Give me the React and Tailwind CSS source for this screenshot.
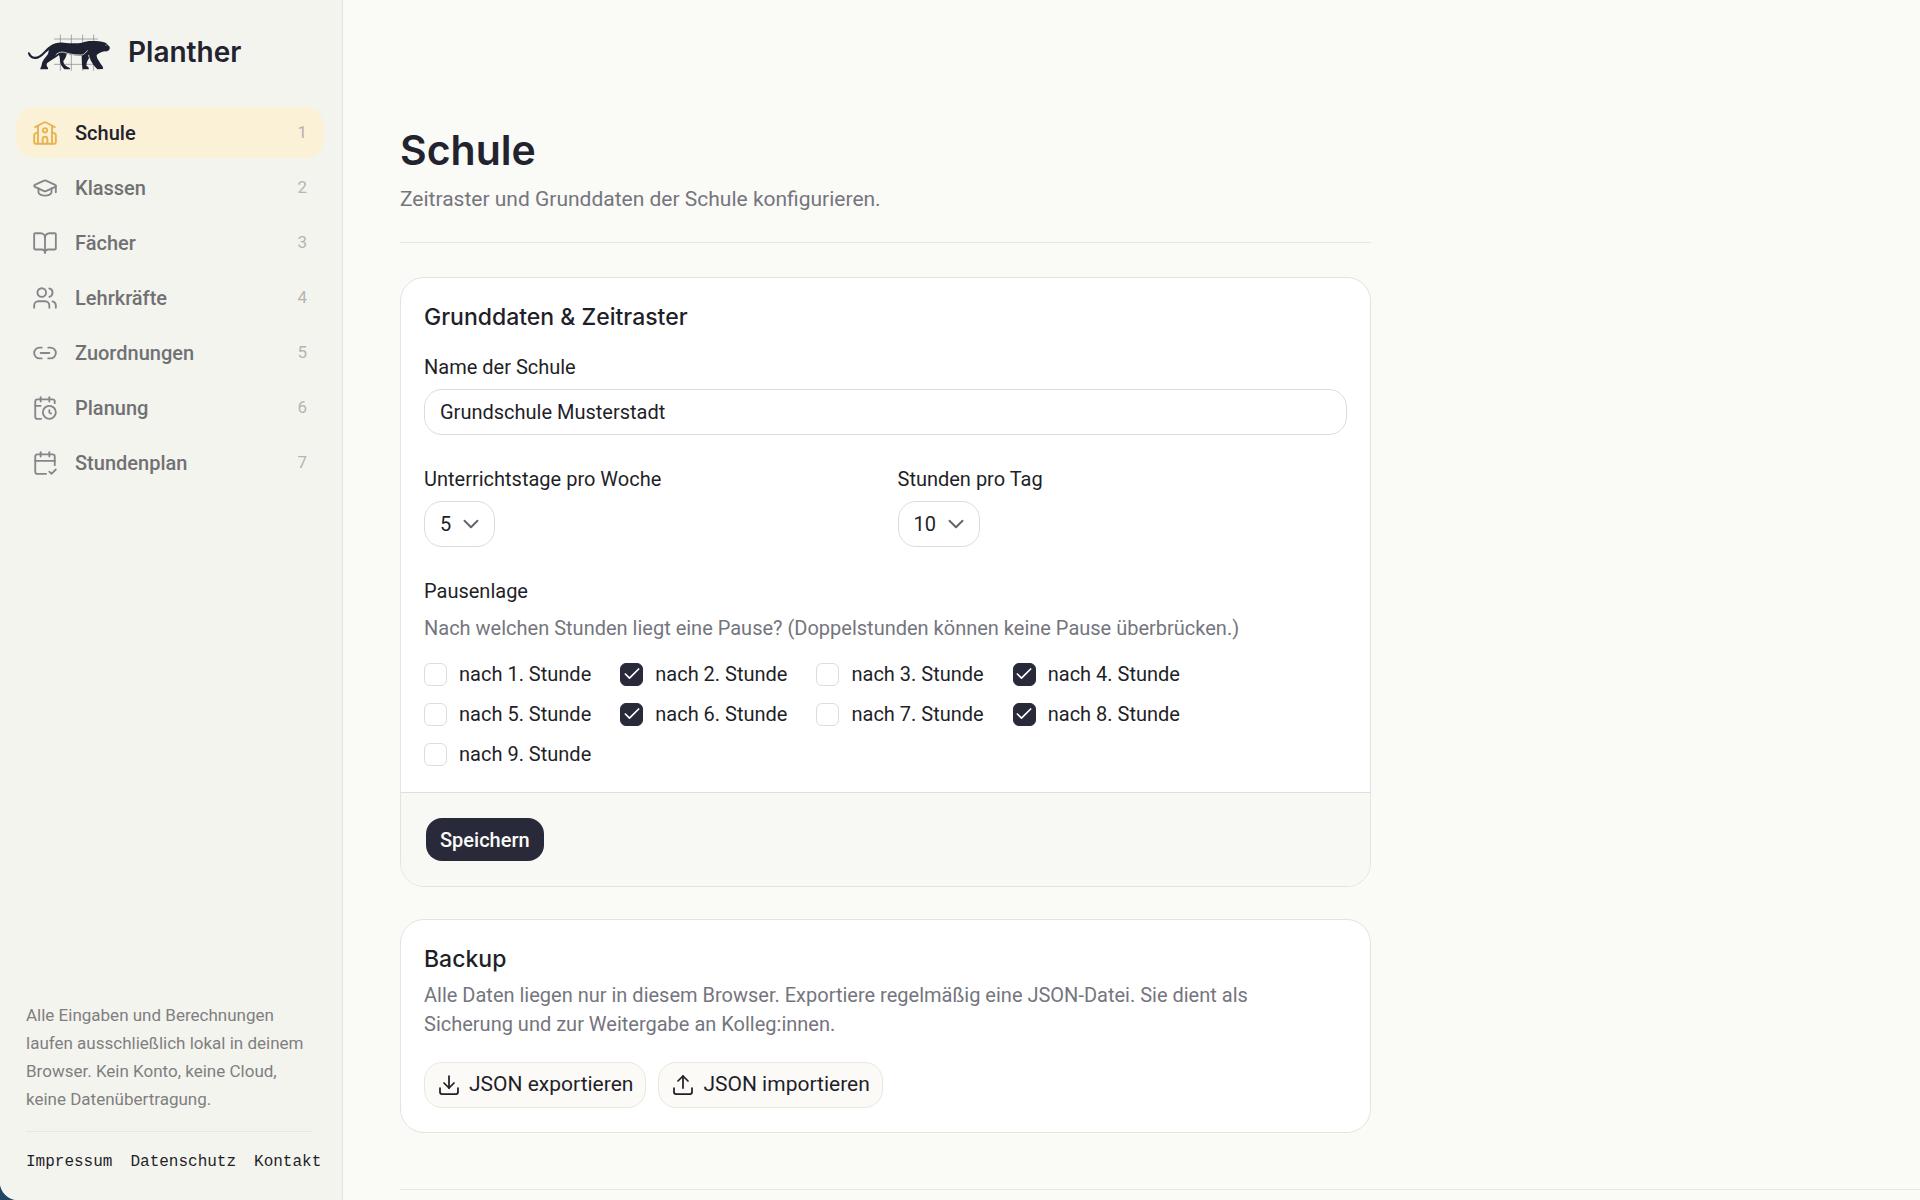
import { useState } from "react";
import {
  BookOpen,
  CalendarCheck2,
  CalendarClock,
  Check,
  ChevronDown,
  Download,
  GraduationCap,
  Link2,
  Upload,
  Users,
} from "lucide-react";

function SchoolIcon(props) {
  return (
    <svg
      viewBox="0 0 24 24"
      fill="none"
      stroke="currentColor"
      strokeWidth="1.8"
      strokeLinecap="round"
      strokeLinejoin="round"
      aria-hidden="true"
      className={props.className}
    >
      <path d="M3 6.6 11 2.3a2 2 0 0 1 2 0l8 4.3" />
      <path d="M5.5 5.4V22M18.5 5.4V22" />
      <path d="M5.5 11.5 3.2 12.4A2 2 0 0 0 2 14.2V20a2 2 0 0 0 2 2h16a2 2 0 0 0 2-2v-5.8a2 2 0 0 0-1.2-1.8l-2.3-.9" />
      <circle cx="12" cy="9.5" r="2" />
      <path d="M9.8 22v-4.3a2.2 2.2 0 0 1 4.4 0V22" />
    </svg>
  );
}

function PantherLogo() {
  return (
    <svg viewBox="0 0 270 132" className="h-11 w-[90px] shrink-0" aria-hidden="true">
      <g stroke="#85868c" strokeWidth="2.2" fill="none">
        <path d="M103 14V122M136 14V122M170 14V122M203 14V122" />
        <path d="M84 27H216M84 103H216" />
      </g>
      <path
        fill="#1e2131"
        d="M6 70C5 66 10 65 12 69C15 77 21 81 29 80C47 78 55 58 73 47C84 40 97 37 112 38C132 40 152 41 168 38C178 34 190 32 203 33C214 33 223 34 231 36C240 38 243 41 245 45C250 48 253 52 251 56C249 62 243 65 236 64C227 66 220 69 212 75C211 83 218 92 226 104C229 108 233 112 231 117L214 118C206 110 197 98 190 84C185 90 182 97 181 107C186 110 190 113 188 118L170 118C168 108 167 92 167 77C151 77 137 74 122 71C121 80 117 87 112 93C112 101 117 107 125 111C130 113 134 115 132 118L115 118C108 110 102 101 102 92C102 85 101 80 99 75C88 84 73 91 63 100C61 105 62 110 66 113C67 116 66 118 63 118L43 118C42 113 47 110 47 104C48 93 58 83 66 72C67 67 68 63 69 60C56 69 46 86 29 87C17 88 8 80 6 70Z"
      />
      <path
        fill="none"
        stroke="#f4f4ef"
        strokeWidth="2.4"
        strokeLinecap="round"
        d="M90 74C98 66 108 64 121 69C138 74 152 75 168 75C174 74 179 68 184 62M188 76C188 80 190 84 192 87"
      />
      <circle cx="240" cy="45" r="1.6" fill="#f4f4ef" />
    </svg>
  );
}

const navItems = [
  { label: "Schule", icon: SchoolIcon },
  { label: "Klassen", icon: GraduationCap },
  { label: "Fächer", icon: BookOpen },
  { label: "Lehrkräfte", icon: Users },
  { label: "Zuordnungen", icon: Link2 },
  { label: "Planung", icon: CalendarClock },
  { label: "Stundenplan", icon: CalendarCheck2 },
];

function Sidebar() {
  return (
    <aside className="flex w-[343px] shrink-0 flex-col border-r border-[#e6e2d9] bg-[#f4f4ef]">
      <div className="flex items-center gap-3 pt-[30px] pl-[26px]">
        <PantherLogo />
        <span className="font-[Inter,sans-serif] text-[28px] leading-9 font-semibold text-[#23232f]">
          Planther
        </span>
      </div>
      <nav className="mt-[33px] flex flex-col gap-1 pr-[18px] pl-4">
        {navItems.map(({ label, icon: Icon }, i) => (
          <a
            key={label}
            href="#"
            aria-current={i === 0 ? "page" : undefined}
            className={
              i === 0
                ? "flex h-[51px] items-center gap-[17px] rounded-[18px] bg-[#faf1d6] px-4 text-[#23232f]"
                : "flex h-[51px] items-center gap-[17px] rounded-[18px] px-4 text-[#717174]"
            }
          >
            <Icon
              strokeWidth={1.7}
              className={i === 0 ? "size-[26px] text-[#e9b44f]" : "size-[26px] text-[#85858a]"}
            />
            <span className="flex-1 text-xl font-medium">{label}</span>
            <span className="pr-px text-[17px] text-[#b4b4b0]">{i + 1}</span>
          </a>
        ))}
      </nav>
      <div className="mt-auto pb-[26px] pl-[26px]">
        <div className="mr-[30px] border-b border-[#eee4dc] pb-[18px]">
          <p className="text-[17px] leading-7 text-[#7f7f80]">
            Alle Eingaben und Berechnungen laufen ausschließlich lokal in deinem Browser. Kein Konto,
            keine Cloud, keine Datenübertragung.
          </p>
        </div>
        <div className="mt-[18px] flex gap-[18px] font-['Liberation_Mono',monospace] text-base leading-6 text-[#1f1f29]">
          <a href="#">Impressum</a>
          <a href="#">Datenschutz</a>
          <a href="#">Kontakt</a>
        </div>
      </div>
    </aside>
  );
}

function SelectField({ id, label, value, options, onChange }) {
  return (
    <div className="flex flex-col items-start gap-[10px]">
      <label htmlFor={id} className="text-xl leading-6">
        {label}
      </label>
      <div className="grid items-center">
        <select
          id={id}
          value={value}
          onChange={(e) => onChange(e.target.value)}
          className="col-start-1 row-start-1 field-sizing-content h-[46px] appearance-none rounded-[18px] border border-[#dcdcd6] bg-white pr-[43px] pl-[15px] text-xl"
        >
          {options.map((o) => (
            <option key={o}>{o}</option>
          ))}
        </select>
        <ChevronDown
          strokeWidth={1.75}
          className="pointer-events-none col-start-1 row-start-1 mr-[11px] size-[26px] justify-self-end text-[#63636b]"
        />
      </div>
    </div>
  );
}

function BreakCheckbox({ hour, checked, onToggle }) {
  return (
    <label className="flex items-center gap-3 text-xl leading-6">
      <span className="grid place-items-center">
        <input
          type="checkbox"
          checked={checked}
          onChange={onToggle}
          className="peer col-start-1 row-start-1 size-[23px] appearance-none rounded-md border border-[#dfddd6] bg-white checked:border-[#282a3a] checked:bg-[#282a3a]"
        />
        <Check
          strokeWidth={2}
          className="pointer-events-none invisible col-start-1 row-start-1 size-5 text-white peer-checked:visible"
        />
      </span>
      nach {hour}. Stunde
    </label>
  );
}

const cardClass = "overflow-hidden rounded-3xl border border-[#e4e4df] bg-white";
const cardTitle = "font-[Inter,sans-serif] text-[23px] leading-[30px] font-medium text-[#1f1f29]";
const outlineButton =
  "flex h-[46px] items-center gap-2 rounded-[18px] border border-[#eae7df] bg-[#fbfaf7] px-3 text-[21px] text-[#1f1f29]";

export default function App() {
  const [name, setName] = useState("Grundschule Musterstadt");
  const [days, setDays] = useState("5");
  const [hours, setHours] = useState("10");
  const [breaks, setBreaks] = useState([2, 4, 6, 8]);

  const toggle = (h) =>
    setBreaks((b) => (b.includes(h) ? b.filter((x) => x !== h) : [...b, h]));

  return (
    <div className="bg-[#1f4763]">
      <div className="flex min-h-screen overflow-hidden rounded-bl-[18px] bg-[#fafaf6] font-[Roboto,sans-serif] text-[#1f1f29]">
        <Sidebar />
        <main className="min-w-0 flex-1 pt-[126px] pl-[57px]">
          <div className="max-w-[971px]">
            <header className="border-b border-[#e6e6e1] pb-7">
              <h1 className="font-[Inter,sans-serif] text-[41px] leading-[48px] font-semibold text-[#23232f]">
                Schule
              </h1>
              <p className="mt-[10px] text-[21px] leading-[30px] text-[#75757e]">
                Zeitraster und Grunddaten der Schule konfigurieren.
              </p>
            </header>

            <form className={`mt-[34px] ${cardClass}`} onSubmit={(e) => e.preventDefault()}>
              <div className="px-[23px] pt-6 pb-[26px]">
                <h2 className={cardTitle}>Grunddaten &amp; Zeitraster</h2>
                <div className="mt-[23px] flex flex-col gap-[10px]">
                  <label htmlFor="name" className="text-xl leading-6">
                    Name der Schule
                  </label>
                  <input
                    id="name"
                    type="text"
                    value={name}
                    onChange={(e) => setName(e.target.value)}
                    className="h-[46px] w-full rounded-[18px] border border-[#dcdcd6] bg-white px-[15px] text-xl"
                  />
                </div>
                <div className="mt-8 grid grid-cols-2 gap-6">
                  <SelectField
                    id="days"
                    label="Unterrichtstage pro Woche"
                    value={days}
                    options={["5", "6"]}
                    onChange={setDays}
                  />
                  <SelectField
                    id="hours"
                    label="Stunden pro Tag"
                    value={hours}
                    options={["8", "9", "10"]}
                    onChange={setHours}
                  />
                </div>
                <fieldset className="mt-8">
                  <legend className="text-xl leading-6">Pausenlage</legend>
                  <p className="mt-[13px] text-xl leading-6 text-[#75757e]">
                    Nach welchen Stunden liegt eine Pause? (Doppelstunden können keine Pause
                    überbrücken.)
                  </p>
                  <div className="mt-[22px] grid grid-cols-[repeat(4,max-content)] gap-x-[29px] gap-y-4">
                    {[1, 2, 3, 4, 5, 6, 7, 8, 9].map((h) => (
                      <BreakCheckbox
                        key={h}
                        hour={h}
                        checked={breaks.includes(h)}
                        onToggle={() => toggle(h)}
                      />
                    ))}
                  </div>
                </fieldset>
              </div>
              <div className="border-t border-[#dfdfda] bg-[#f8f8f5] p-[25px]">
                <button
                  type="submit"
                  className="h-[43px] rounded-2xl bg-[#282a3a] px-[14px] text-xl font-medium text-[#fbfbf8]"
                >
                  Speichern
                </button>
              </div>
            </form>

            <section className={`mt-8 px-[23px] py-6 ${cardClass}`}>
              <h2 className={cardTitle}>Backup</h2>
              <p className="mt-[7px] max-w-[880px] text-xl leading-[29px] text-[#75757e]">
                Alle Daten liegen nur in diesem Browser. Exportiere regelmäßig eine JSON-Datei. Sie
                dient als Sicherung und zur Weitergabe an Kolleg:innen.
              </p>
              <div className="mt-[23px] flex gap-3">
                <button type="button" className={outlineButton}>
                  <Download strokeWidth={1.75} className="size-6" />
                  JSON exportieren
                </button>
                <button type="button" className={outlineButton}>
                  <Upload strokeWidth={1.75} className="size-6" />
                  JSON importieren
                </button>
              </div>
            </section>
          </div>
          <div className="mt-14 border-t border-[#ece5df]" />
        </main>
      </div>
    </div>
  );
}
